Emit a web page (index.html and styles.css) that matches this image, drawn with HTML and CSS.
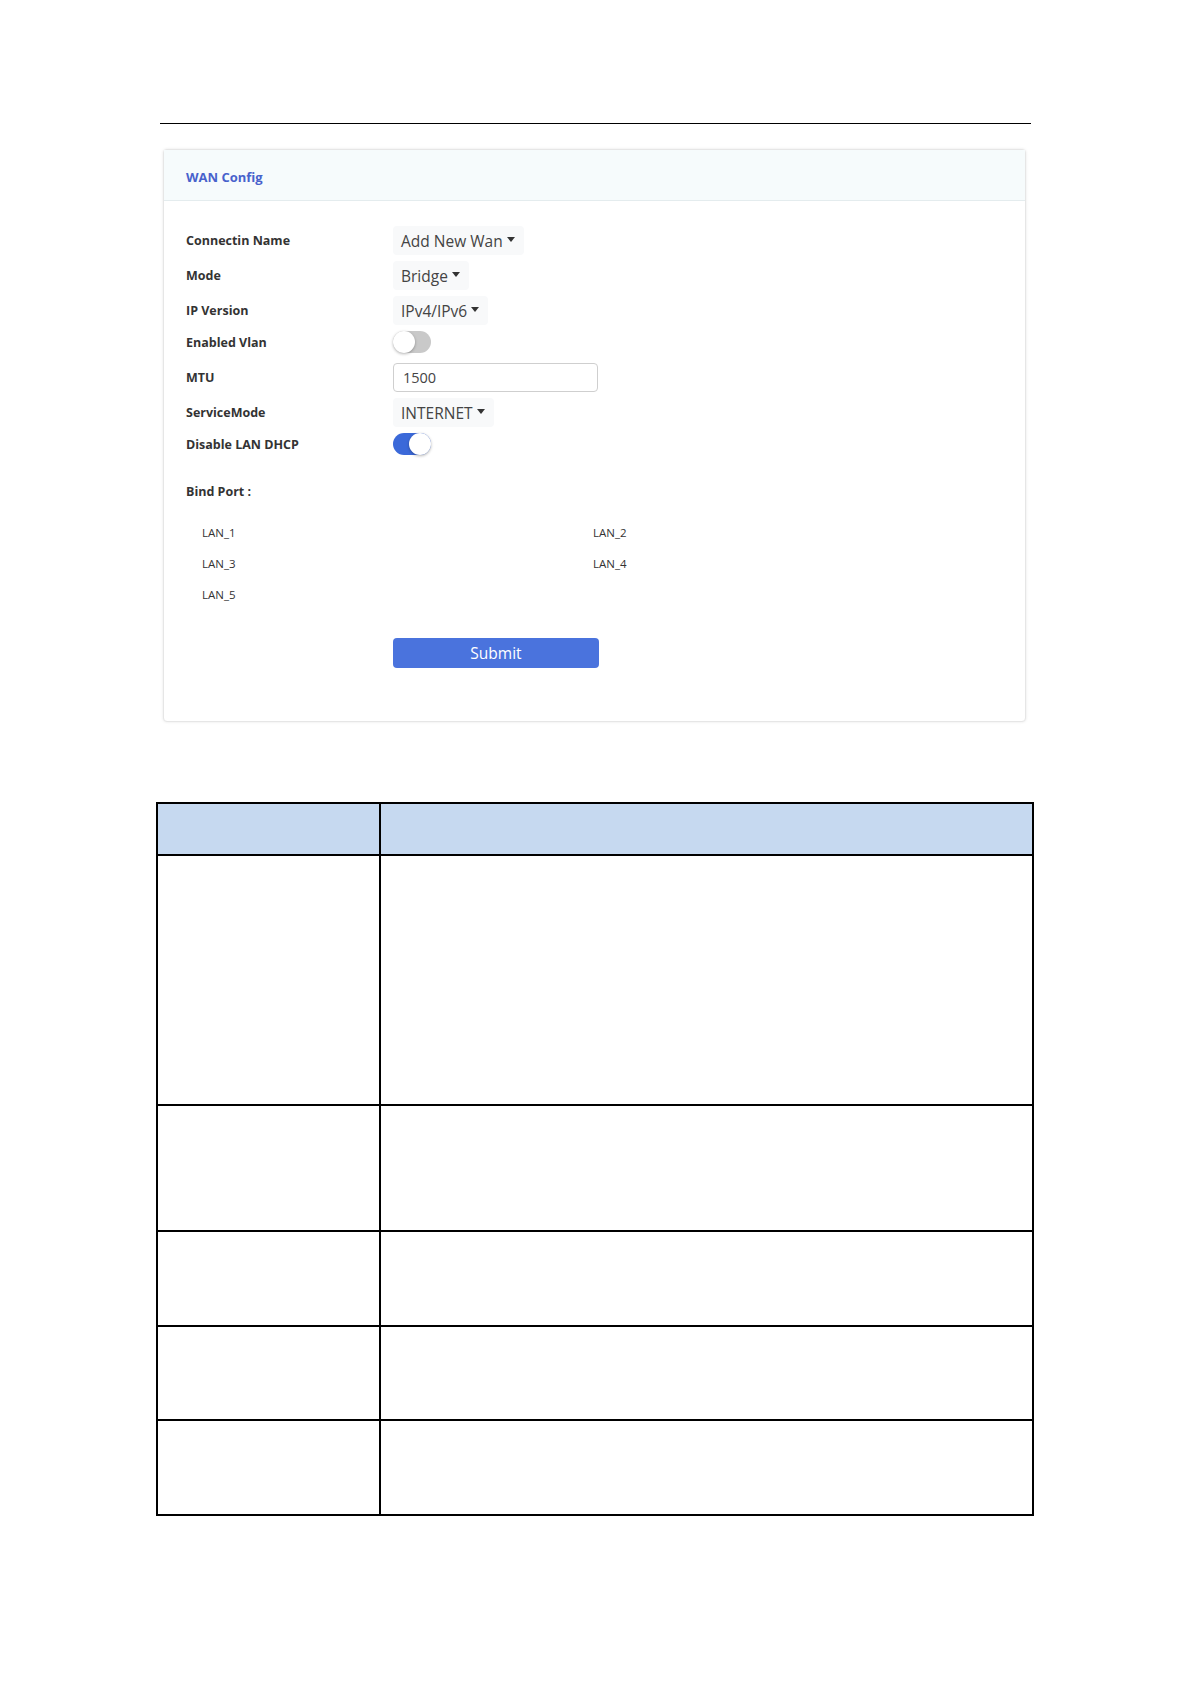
FILE: index.html
```html
<!DOCTYPE html>
<html lang="en">
<head>
<meta charset="utf-8">
<title>WAN Config</title>
<link rel="stylesheet" href="styles.css">
</head>
<body>
<div class="page">
  <div class="rule"></div>

  <section class="card">
    <header class="card-header"><h2 class="card-title">WAN Config</h2></header>
    <div class="card-body">
      <div class="row">
        <span class="label">Connectin Name</span>
        <span class="dropdown">Add New Wan<i class="caret"></i></span>
      </div>
      <div class="row">
        <span class="label">Mode</span>
        <span class="dropdown">Bridge<i class="caret"></i></span>
      </div>
      <div class="row">
        <span class="label">IP Version</span>
        <span class="dropdown">IPv4/IPv6<i class="caret"></i></span>
      </div>
      <div class="row row-toggle">
        <span class="label">Enabled Vlan</span>
        <span class="toggle"><span class="knob"></span></span>
      </div>
      <div class="row row-input">
        <span class="label">MTU</span>
        <span class="input">1500</span>
      </div>
      <div class="row">
        <span class="label">ServiceMode</span>
        <span class="dropdown">INTERNET<i class="caret"></i></span>
      </div>
      <div class="row row-toggle">
        <span class="label">Disable LAN DHCP</span>
        <span class="toggle on"><span class="knob"></span></span>
      </div>

      <div class="bind-label">Bind Port :</div>
      <div class="ports">
        <span>LAN_1</span><span>LAN_2</span>
        <span>LAN_3</span><span>LAN_4</span>
        <span>LAN_5</span>
      </div>

      <div class="actions"><button class="submit">Submit</button></div>
    </div>
  </section>

  <table class="doc-table">
    <colgroup><col class="c1"><col class="c2"></colgroup>
    <tr class="h"><td></td><td></td></tr>
    <tr class="r1"><td></td><td></td></tr>
    <tr class="r2"><td></td><td></td></tr>
    <tr class="r3"><td></td><td></td></tr>
    <tr class="r4"><td></td><td></td></tr>
    <tr class="r5"><td></td><td></td></tr>
  </table>
</div>
</body>
</html>
```

FILE: styles.css
```css
* { box-sizing: border-box; }
html, body { margin: 0; padding: 0; background: #fff; }
body { font-family: "Open Sans", "Noto Sans", "DejaVu Sans", sans-serif; color: #333; }

.page { width: 1191px; padding-top: 123px; }

.rule { margin-left: 160px; width: 871px; border-top: 1px solid #000; }

.card {
  margin: 25px 0 0 163px;
  width: 863px;
  border: 1px solid #e6e6e6;
  border-radius: 4px;
  box-shadow: 0 0 3px rgba(0,0,0,0.10);
  background: #fff;
}
.card-header {
  height: 51px;
  background: #f6fbfc;
  border-bottom: 1px solid #e4ecee;
  display: flex;
  align-items: center;
  padding: 3px 0 0 22px;
}
.card-title { margin: 0; font-size: 13px; font-weight: 700; color: #4862cc; }

.card-body { padding: 25px 22px 53px 22px; }

.row { display: flex; align-items: center; height: 29px; margin-bottom: 6px; }
.row-toggle { height: 22px; }
.row-input { margin-top: 10px; }
.label { width: 207px; flex: none; font-size: 12.5px; font-weight: 700; color: #333; }

.dropdown {
  display: inline-flex;
  align-items: center;
  height: 29px;
  padding: 0 9px 0 8px;
  background: #f8f9fa;
  border-radius: 4px;
  font-size: 15.5px;
  color: #444;
}
.caret {
  display: inline-block;
  width: 0; height: 0;
  margin-left: 4px;
  margin-top: -2px;
  border-left: 4.5px solid transparent;
  border-right: 4.5px solid transparent;
  border-top: 5px solid #333;
}

.toggle {
  position: relative;
  display: inline-block;
  width: 38px; height: 22px;
  border-radius: 11px;
  background: #c9c9c9;
}
.toggle .knob {
  position: absolute;
  left: 0; top: 0;
  width: 22px; height: 22px;
  border-radius: 50%;
  background: #fff;
  box-shadow: 0 1px 3px rgba(0,0,0,0.3);
}
.toggle.on { background: #3b69d9; }
.toggle.on .knob { left: 16px; }

.input {
  display: flex;
  align-items: center;
  width: 205px; height: 29px;
  padding-left: 9px;
  border: 1px solid #cfcfcf;
  border-radius: 4px;
  font-size: 14.5px;
  color: #444;
}

.bind-label { margin-top: 27px; height: 20px; line-height: 20px; font-size: 12.5px; font-weight: 700; color: #333; }

.ports {
  margin-top: 15px;
  padding-left: 16px;
  display: grid;
  grid-template-columns: 391px 391px;
  grid-auto-rows: 31px;
  align-items: center;
  font-size: 11.5px;
  color: #333;
}

.actions { margin-top: 28px; padding-left: 207px; }
.submit {
  display: block;
  width: 206px; height: 30px;
  border: 0;
  border-radius: 4px;
  background: #4a73dd;
  color: #fff;
  font-family: inherit;
  font-size: 15.5px;
  padding: 0;
}

.doc-table {
  margin: 80px 0 0 156px;
  width: 878px;
  table-layout: fixed;
  border-collapse: separate;
  border-spacing: 0;
  border-top: 2px solid #000;
  border-left: 2px solid #000;
}
.doc-table .c1 { width: 223px; }
.doc-table td { border-right: 2px solid #000; border-bottom: 2px solid #000; padding: 0; }
.doc-table tr.h td { background: #c6d9f0; }
.doc-table tr.h { height: 52px; }
.doc-table tr.r1 { height: 250px; }
.doc-table tr.r2 { height: 126px; }
.doc-table tr.r3 { height: 95px; }
.doc-table tr.r4 { height: 94px; }
.doc-table tr.r5 { height: 95px; }
```
